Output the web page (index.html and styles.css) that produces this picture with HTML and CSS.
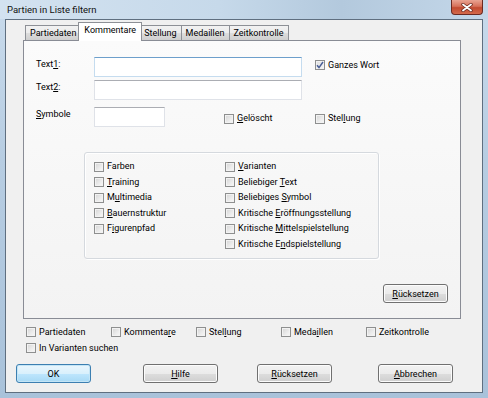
FILE: index.html
```html
<!DOCTYPE html>
<html lang="de">
<head>
  <meta charset="UTF-8" />
  <title>Partien in Liste filtern</title>
  <link rel="stylesheet" href="styles.css">
</head>
<body>
  <div class="window">
    <div class="titlebar">
      <span class="title">Partien in Liste filtern</span>
      <div class="close">
        <svg width="14" height="9" viewBox="0 0 14 9">
          <path d="M3 1.5 L11 7.5 M11 1.5 L3 7.5" stroke="#6a2a20" stroke-width="3.4" stroke-linecap="round"/>
          <path d="M3 1.5 L11 7.5 M11 1.5 L3 7.5" stroke="#fff" stroke-width="1.8" stroke-linecap="round"/>
        </svg>
      </div>
    </div>

    <div class="client">
      <div class="tabs">
        <div class="tab">Partiedaten</div>
        <div class="tab tab--active">Kommentare</div>
        <div class="tab">Stellung</div>
        <div class="tab">Medaillen</div>
        <div class="tab">Zeitkontrolle</div>
      </div>

      <div class="panel">
        <div class="row row--first">
          <span class="label">Text<u>1</u>:</span>
          <input class="field field--focus" type="text" />
          <label class="check check--high"><span class="box box--checked"><svg width="8" height="8" viewBox="0 0 8 8"><path d="M1 4.2 L3 6.6 L7 1" fill="none" stroke="#4a5f97" stroke-width="1.5"/></svg></span><span>Ganzes Wort</span></label>
        </div>
        <div class="row row--second">
          <span class="label">Text<u>2</u>:</span>
          <input class="field" type="text" />
        </div>
        <div class="row row--third">
          <span class="label"><u>S</u>ymbole</span>
          <input class="field field--short" type="text" />
          <label class="check check--low check--wide"><span class="box"></span><span><u>G</u>elöscht</span></label>
          <label class="check check--low"><span class="box"></span><span>Stel<u>l</u>ung</span></label>
        </div>

        <div class="group">
          <label class="check"><span class="box"></span><span>Farben</span></label>
          <label class="check"><span class="box"></span><span><u>V</u>arianten</span></label>
          <label class="check"><span class="box"></span><span><u>T</u>raining</span></label>
          <label class="check"><span class="box"></span><span>Beliebiger <u>T</u>ext</span></label>
          <label class="check"><span class="box"></span><span>M<u>u</u>ltimedia</span></label>
          <label class="check"><span class="box"></span><span>Beliebiges <u>S</u>ymbol</span></label>
          <label class="check"><span class="box"></span><span><u>B</u>auernstruktur</span></label>
          <label class="check"><span class="box"></span><span>Kritische <u>E</u>röffnungsstellung</span></label>
          <label class="check"><span class="box"></span><span>F<u>i</u>gurenpfad</span></label>
          <label class="check"><span class="box"></span><span>Kritische <u>M</u>ittelspielstellung</span></label>
          <span></span>
          <label class="check"><span class="box"></span><span>Kritische E<u>n</u>dspielstellung</span></label>
        </div>

        <div class="panel__foot">
          <button class="btn btn--small"><u>R</u>ücksetzen</button>
        </div>
      </div>

      <div class="scope">
        <label class="check"><span class="box"></span><span>Partiedaten</span></label>
        <label class="check"><span class="box"></span><span>Kommenta<u>r</u>e</span></label>
        <label class="check"><span class="box"></span><span>Stel<u>l</u>ung</span></label>
        <label class="check"><span class="box"></span><span>Meda<u>i</u>llen</span></label>
        <label class="check"><span class="box"></span><span>Zeitkontrolle</span></label>
        <label class="check check--span"><span class="box"></span><span>In Varianten suchen</span></label>
      </div>

      <div class="actions">
        <button class="btn btn--default">OK</button>
        <button class="btn btn--help"><u>H</u>ilfe</button>
        <button class="btn btn--reset"><u>R</u>ücksetzen</button>
        <button class="btn btn--cancel"><u>A</u>bbrechen</button>
      </div>
    </div>
  </div>
</body>
</html>
```

FILE: styles.css
```css
body {
  margin: 0;
  font-family: Roboto, 'Noto Sans', sans-serif;
  font-size: 9px;
  color: #000;
}
u {
  text-decoration-thickness: 1px;
  text-underline-offset: 1px;
}
.window {
  width: 488px;
  height: 398px;
  display: flex;
  flex-direction: column;
  background: linear-gradient(180deg, #c9dbec 0%, #b7cde2 40%, #a9c2da 100%);
  overflow: hidden;
}
.titlebar {
  height: 19px;
  display: flex;
  align-items: flex-start;
  background: linear-gradient(90deg, #d3e2f0 0%, #c6d9ea 45%, #b3c9dd 70%, #c4d7e9 100%);
}
.title {
  margin: 3px 0 0 7px;
  line-height: 13px;
  font-size: 9.5px;
  color: #111;
}
.close {
  margin-left: auto;
  margin-right: 5px;
  width: 32px;
  height: 15px;
  box-sizing: border-box;
  border: 1px solid #6b2a22;
  border-top: none;
  border-radius: 0 0 4px 4px;
  background: linear-gradient(180deg, #e9a493 0%, #d7715a 45%, #c24a30 55%, #d46a4c 100%);
  display: flex;
  align-items: center;
  justify-content: center;
}
.client {
  margin-left: 5px;
  width: 478px;
  height: 374px;
  box-sizing: border-box;
  border: 1px solid #5f6f80;
  background: #f0f0f0;
  display: flex;
  flex-direction: column;
}

/* tabs */
.tabs {
  display: flex;
  align-items: flex-end;
  height: 20px;
  padding-left: 19px;
  position: relative;
  z-index: 1;
}
.tab {
  height: 14px;
  line-height: 14px;
  padding: 0 4px;
  border: 1px solid #8d9096;
  border-bottom: none;
  margin-left: -1px;
  background: linear-gradient(180deg, #f2f2f2 0%, #ebebeb 50%, #dddddd 51%, #cfcfcf 100%);
  white-space: nowrap;
}
.tab:first-child {
  margin-left: 0;
}
.tab--active {
  height: 18px;
  line-height: 15px;
  margin: 0 -2px -1px -3px;
  padding: 0 5px;
  background: #fff;
  position: relative;
  z-index: 2;
}
.tab--active + .tab {
  border-left: none;
  margin-left: 0;
}
.panel {
  margin-left: 17px;
  width: 438px;
  height: 279px;
  box-sizing: border-box;
  border: 1px solid #898c95;
  background: linear-gradient(180deg, #fbfbfb 0%, #f3f3f3 100%);
  display: flex;
  flex-direction: column;
}

/* text rows */
.row {
  display: flex;
  align-items: center;
  padding-left: 12px;
}
.row--first { margin-top: 16px; }
.row--second { margin-top: 3px; }
.row--third { margin-top: 7px; }
.label {
  width: 58px;
  margin-bottom: 6px;
  line-height: 13px;
}
.field {
  width: 208px;
  height: 20px;
  box-sizing: border-box;
  margin: 0;
  border: 1px solid #dfe2e8;
  border-top-color: #abadb3;
  background: #fff;
}
.field--focus {
  border-color: #c5dcef;
  border-top-color: #6d9fcb;
}
.field--short {
  width: 71px;
}
.check {
  display: flex;
  align-items: center;
  height: 15px;
  line-height: 13px;
  white-space: nowrap;
}
.box {
  flex: none;
  width: 10px;
  height: 10px;
  box-sizing: border-box;
  margin-right: 3px;
  border: 1px solid #8e8f8f;
  background: linear-gradient(135deg, #d4d4d4 0%, #ececec 60%, #f8f8f8 100%);
  box-shadow: inset 0 0 0 1px #f2f2f2;
  display: flex;
  align-items: center;
  justify-content: center;
}
.box--checked {
  background: linear-gradient(135deg, #dedede 0%, #f6f6f6 100%);
}
.row .check {
  margin-left: 13px;
}
.check--high { margin-bottom: 4px; }
.check--low { margin-top: 3px; }
.row .check--wide {
  margin-left: 59px;
  width: 91px;
}
.row .check--wide + .check {
  margin-left: 0;
}

/* options group */
.group {
  margin: 25px 0 0 60px;
  width: 295px;
  box-sizing: border-box;
  padding: 6px 0 6px 9px;
  border: 1px solid #d5d9de;
  border-radius: 3px;
  box-shadow: inset 1px 1px 0 #fff, 1px 1px 0 #fff;
  display: grid;
  grid-template-columns: 131px 1fr;
  grid-auto-rows: 15.5px;
  align-items: center;
}
.panel__foot {
  margin-top: auto;
  display: flex;
  justify-content: flex-end;
  padding: 0 12px 15px 0;
}

/* buttons */
.btn {
  width: 75px;
  height: 19px;
  margin: 0;
  padding: 0;
  box-sizing: border-box;
  font-family: inherit;
  font-size: 9px;
  color: #000;
  border: 1px solid #707070;
  border-radius: 3px;
  background: linear-gradient(180deg, #f2f2f2 0%, #ebebeb 50%, #dddddd 51%, #cfcfcf 100%);
  box-shadow: inset 0 0 0 1px #fcfcfc;
}
.btn--small {
  width: 65px;
}
.btn--default {
  border-color: #3c7fb1;
  background: linear-gradient(180deg, #eaf6fd 0%, #d9f0fc 50%, #bee6fd 51%, #a7d9f5 100%);
  box-shadow: inset 0 0 0 1px #c4e5f6;
}

/* bottom */
.scope {
  margin-top: 5px;
  padding-left: 20px;
  display: grid;
  grid-template-columns: repeat(5, 85px);
  grid-auto-rows: 16px;
  align-items: center;
}
.check--span {
  grid-column: 1 / 4;
}
.actions {
  margin-top: 8px;
  padding-left: 10px;
  display: flex;
}
.btn--help { margin-left: 52px; }
.btn--reset { margin-left: 39px; }
.btn--cancel { margin-left: 46px; }
```
